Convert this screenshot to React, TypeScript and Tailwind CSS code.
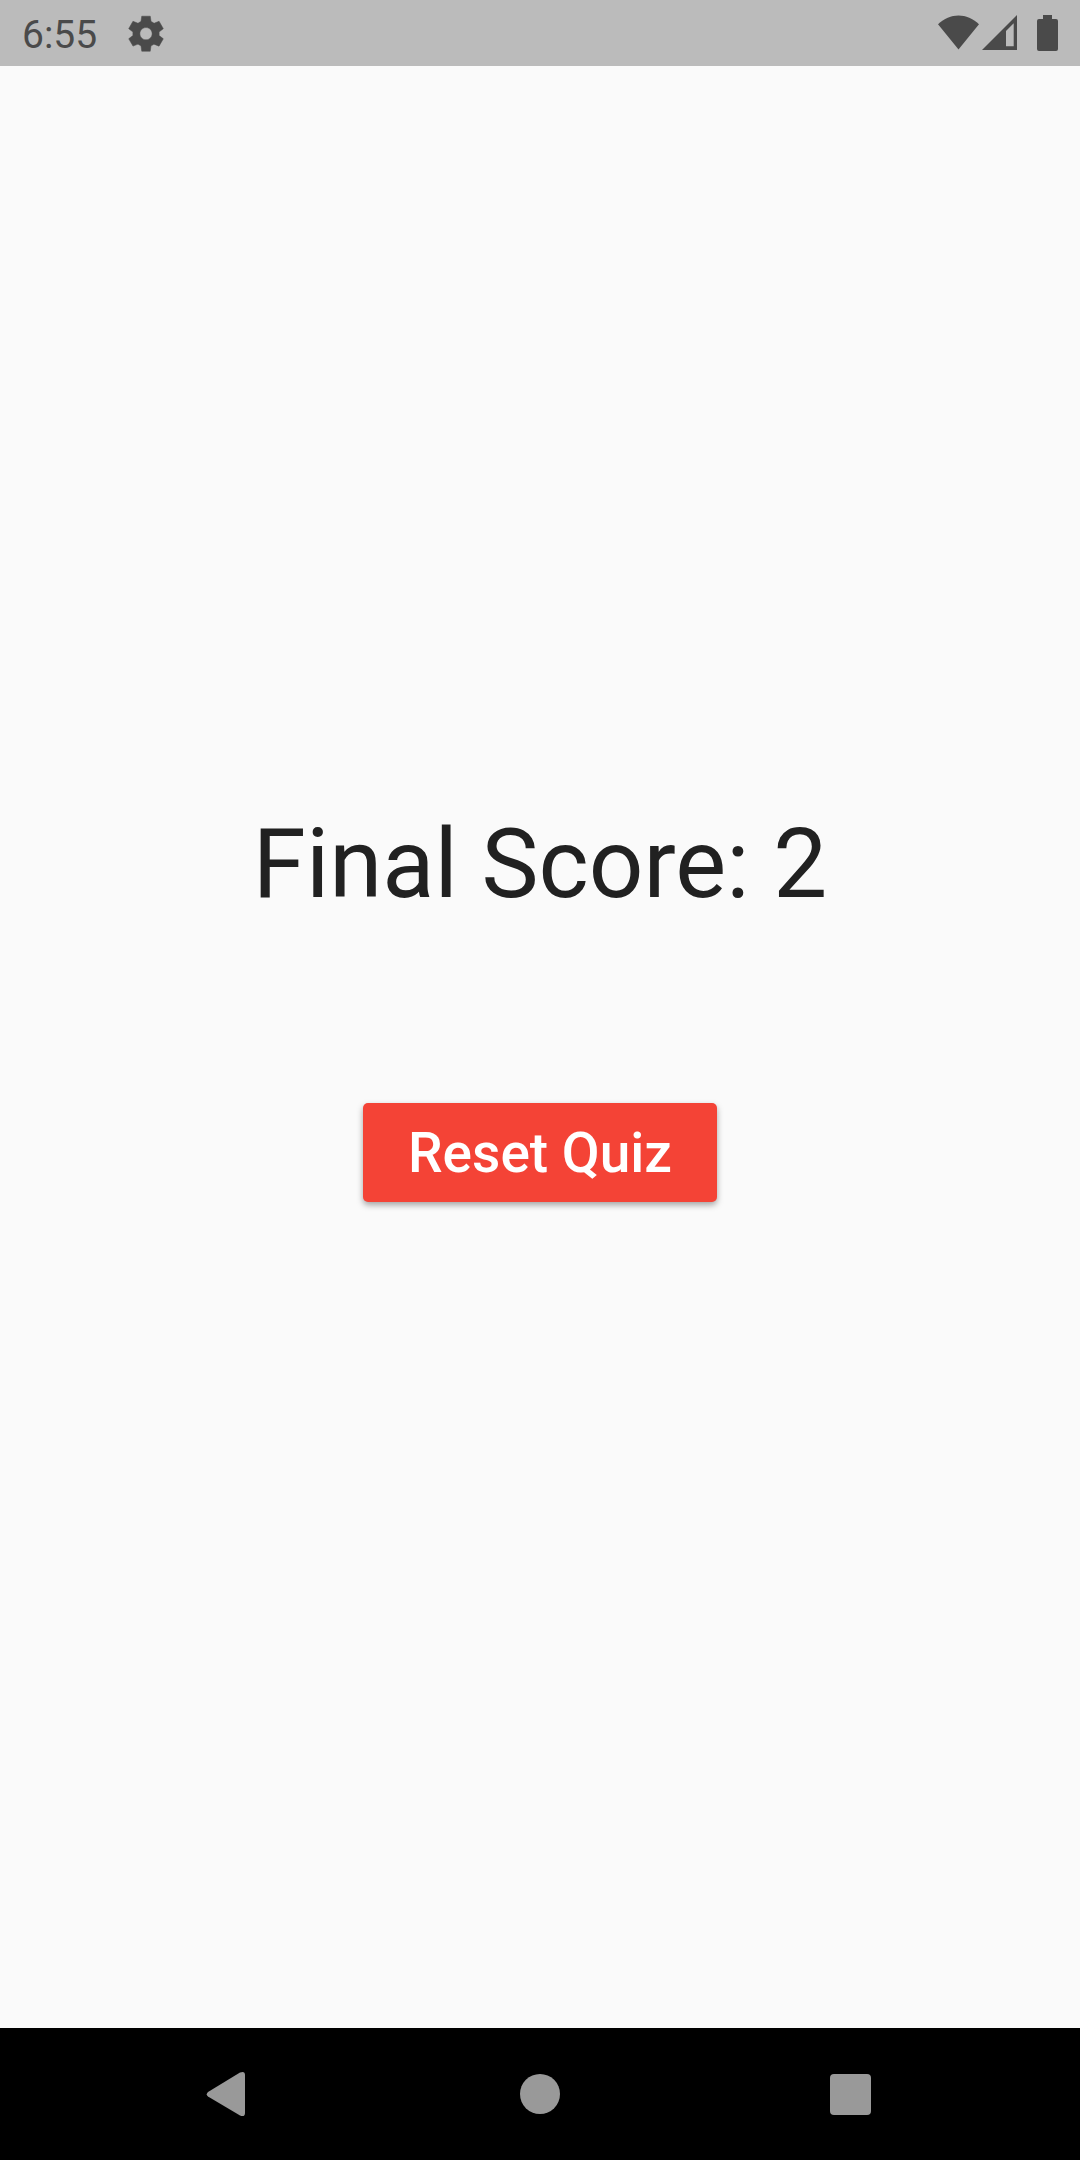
export default function App() {
  return (
    <div className="flex min-h-screen flex-col bg-[#fafafa] font-[Roboto,sans-serif]">
      <header className="flex h-[66px] items-center justify-between bg-[#bbbbbb] px-[22px] text-[#4a4a4a]">
        <div className="flex items-center gap-7">
          <span className="pt-1 text-[39px] leading-[62px]">6:55</span>
          <svg
            className="size-[42px]"
            viewBox="0 -0.4 24 24"
            fill="currentColor"
            stroke="currentColor"
            strokeWidth="0.3"
            strokeLinejoin="round"
            role="img"
            aria-label="Settings"
          >
            <path d="M19.44 12.99l-.01.02c.04-.33.08-.67.08-1.01 0-.34-.03-.66-.07-.99l.01.02 2.44-1.92-2.43-4.22-2.87 1.16.01.01c-.52-.4-1.09-.74-1.71-1h.01L14.44 2H9.57l-.44 3.07h.01c-.62.26-1.19.6-1.71 1l.01-.01-2.88-1.17-2.44 4.22 2.44 1.92.01-.02c-.04.33-.07.65-.07.99 0 .34.03.68.08 1.01l-.01-.02-2.1 1.65-.33.26 2.43 4.2 2.88-1.15-.02-.04c.53.41 1.1.75 1.73 1.01h-.03L9.58 22h4.85s.03-.18.06-.42l.38-2.65h-.01c.62-.26 1.2-.6 1.73-1.01l-.02.04 2.88 1.15 2.43-4.2s-.14-.12-.33-.26l-2.11-1.66zM12 15.5c-1.93 0-3.5-1.57-3.5-3.5s1.57-3.5 3.5-3.5 3.5 1.57 3.5 3.5-1.57 3.5-3.5 3.5z" />
          </svg>
        </div>
        <svg
          className="h-[66px] w-[120px]"
          viewBox="938 0 120 66"
          fill="currentColor"
          role="img"
          aria-label="Wi-Fi, signal and battery"
        >
          <path d="M938 24.300C950 12.500 967 12.500 979 24.300L958.500 49.500Z" />
          <path fillRule="evenodd" d="M982 50L1017 15V50ZM1006 31V46.300H1013.700V23.300Z" />
          <path d="M1043 15h9v4h4q2 0 2 2v28q0 2-2 2h-17q-2 0-2-2v-28q0-2 2-2h4z" />
        </svg>
      </header>
      <main className="flex grow flex-col items-center justify-center gap-[183px] pb-[85px]">
        <h1 className="text-[96px] leading-[112px] text-[#212121]">Final Score: 2</h1>
        <button
          type="button"
          className="rounded-[5px] bg-[#f44336] px-[45px] pt-[18px] pb-4 text-[55px] leading-[65px] font-medium text-white shadow-[0_3px_6px_rgba(0,0,0,0.35)]"
        >
          Reset Quiz
        </button>
      </main>
      <nav className="flex h-[132px] items-center justify-between bg-black pr-[209px] pl-[206px] text-[#999999]">
        <button type="button" aria-label="Back">
          <svg className="h-[46px] w-11" viewBox="0 0 44 46" fill="currentColor">
            <path d="M2 21L34 1.500Q39 -.5 39 4V42Q39 46.500 34 44.500L2 25.500Q-.5 23.250 2 21Z" />
          </svg>
        </button>
        <button type="button" aria-label="Home" className="size-10 rounded-full bg-[#999999]" />
        <button type="button" aria-label="Recent apps" className="size-[41px] rounded-[4px] bg-[#999999]" />
      </nav>
    </div>
  );
}
